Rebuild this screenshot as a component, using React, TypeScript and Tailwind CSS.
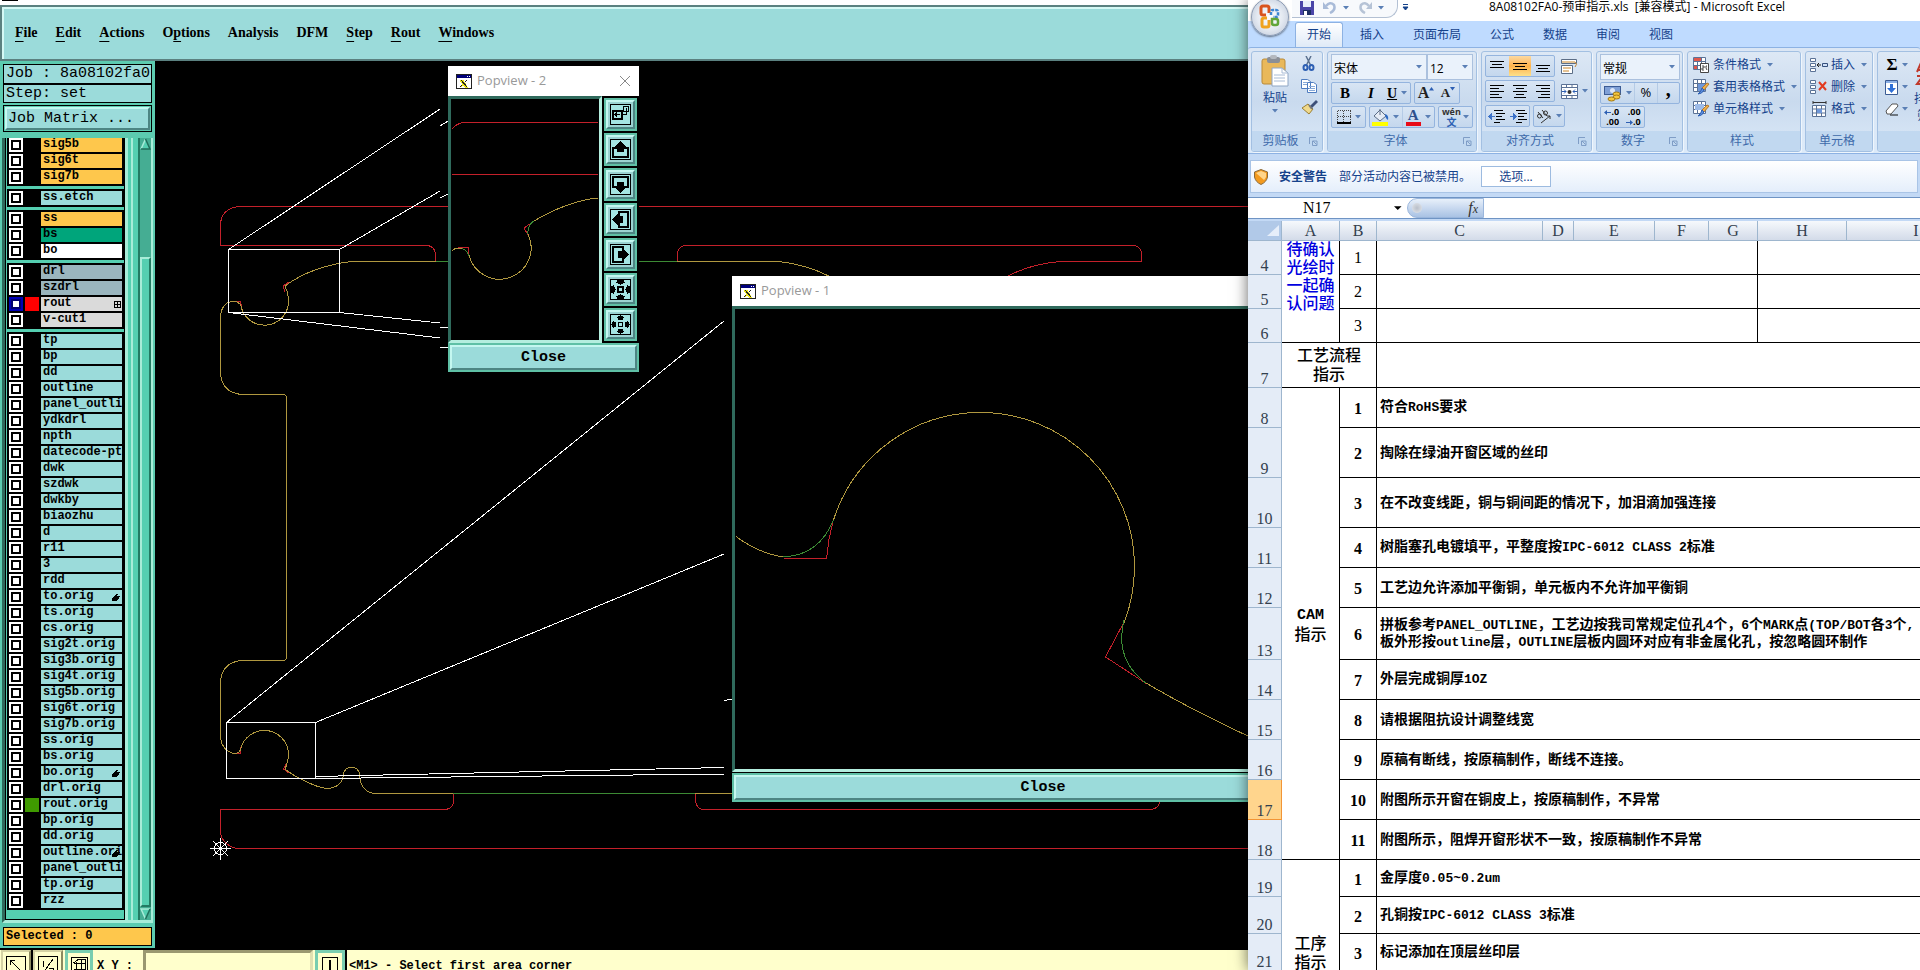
import { Fragment, type ReactNode } from "react";

interface Layer {
  name: string;
  color: string;
  swatch?: string;
  active?: boolean;
  mark?: "grid" | "hand";
}

const AQUA = "bg-[#9bdbda]";
const AMBER = "bg-[#fec74c]";

const aqua = (...names: string[]): Layer[] => names.map((name) => ({ name, color: AQUA }));

const layerGroups: Layer[][] = [
  [
    { name: "sig5b", color: AMBER },
    { name: "sig6t", color: AMBER },
    { name: "sig7b", color: AMBER },
  ],
  aqua("ss.etch"),
  [
    { name: "ss", color: AMBER },
    { name: "bs", color: "bg-[#00a57b]" },
    { name: "bo", color: "bg-white" },
  ],
  [
    { name: "drl", color: "bg-[#9ab5be]" },
    { name: "szdrl", color: "bg-[#9ab5be]" },
    { name: "rout", color: "bg-[#dadada]", swatch: "bg-[#ff0000]", active: true, mark: "grid" },
    { name: "v-cut1", color: "bg-[#dadada]" },
  ],
  [
    ...aqua("tp", "bp", "dd", "outline", "panel_outline", "ydkdrl", "npth", "datecode-pte", "dwk", "szdwk", "dwkby", "biaozhu", "d", "r11", "3", "rdd"),
    { name: "to.orig", color: AQUA, mark: "hand" },
    ...aqua("ts.orig", "cs.orig", "sig2t.orig", "sig3b.orig", "sig4t.orig", "sig5b.orig", "sig6t.orig", "sig7b.orig", "ss.orig", "bs.orig"),
    { name: "bo.orig", color: AQUA, mark: "hand" },
    ...aqua("drl.orig"),
    { name: "rout.orig", color: AQUA, swatch: "bg-[#3f9a00]" },
    ...aqua("bp.orig", "dd.orig"),
    { name: "outline.orig", color: AQUA, mark: "hand" },
    ...aqua("panel_outline", "tp.orig", "rzz"),
  ],
];

const menus = [
  ["", "F", "ile"],
  ["", "E", "dit"],
  ["", "A", "ctions"],
  ["O", "p", "tions"],
  ["Analysis", "", ""],
  ["DFM", "", ""],
  ["", "S", "tep"],
  ["", "R", "out"],
  ["", "W", "indows"],
];

const BEVEL = "border-2 border-t-[#c4f7f0] border-l-[#c4f7f0] border-r-[#4d8583] border-b-[#4d8583]";
const MONO = "font-['Liberation_Mono',monospace]";
const SERIF = "font-['Liberation_Serif','Noto_Sans_CJK_SC',serif]";
const UI = "font-['Open_Sans','Noto_Sans_CJK_SC',sans-serif]";

/* ---------- CAM window ---------- */

function MenuBar() {
  return (
    <nav className="flex h-14 shrink-0 items-center gap-[18px] border-y-2 border-l-2 border-[#5b8180] bg-[#9bdbda] pl-[13px] shadow-[inset_2px_2px_0_#d5f9f5,0_2px_0_#d5f9f5]">
      {menus.map(([pre, key, post]) => (
        <button key={pre + key + post} className="font-['Liberation_Serif',serif] text-[14px] leading-5 font-bold text-black">
          {pre}
          <span className="underline underline-offset-4">{key}</span>
          {post}
        </button>
      ))}
    </nav>
  );
}

function HandMark() {
  return (
    <svg className="absolute top-[4px] right-[2px]" width="8" height="7" viewBox="0 0 8 7" shapeRendering="crispEdges">
      <path d="M4 0h2v1H5v1h3v1H7v1h0v1H6v1H5v1H0V4h1V3h1V2h1V1h1z" />
    </svg>
  );
}

function GridMark() {
  return (
    <svg className="absolute top-[4px] right-px" width="7" height="7" viewBox="0 0 7 7" shapeRendering="crispEdges">
      <path d="M.5 .5h6v6h-6zM3.5 0v7M0 3.5h7" fill="none" stroke="#000" />
    </svg>
  );
}

function LayerRow({ layer, id }: { layer: Layer; id: string }) {
  return (
    <div className="flex h-[14px] items-center">
      <input
        id={id}
        type="checkbox"
        className={
          layer.active
            ? "size-[14px] shrink-0 appearance-none border-2 border-[#0000b4] bg-white shadow-[inset_0_0_0_2px_#000070]"
            : "size-[14px] shrink-0 appearance-none border-2 border-white bg-white shadow-[inset_0_0_0_2px_#000]"
        }
      />
      <span className={`mx-[2px] h-[14px] w-[14px] shrink-0 ${layer.swatch ?? "bg-black"}`} />
      <label
        htmlFor={id}
        className={`relative h-[14px] min-w-0 flex-1 overflow-hidden pl-[2px] text-[12px] leading-[13px] font-bold whitespace-nowrap ${MONO} ${layer.color}`}
      >
        {layer.name}
        {layer.mark === "hand" && <HandMark />}
        {layer.mark === "grid" && <GridMark />}
      </label>
    </div>
  );
}

function Sidebar() {
  return (
    <aside className={`flex w-[155px] shrink-0 flex-col border-x-2 border-[#5ccbb0] bg-[#5ccbb0] text-black ${MONO}`}>
      <div className="mx-px mt-[3px] border border-black">
        <div className="h-[18px] overflow-hidden bg-[#9bdbda] pl-[2px] text-[15px] leading-[18px] whitespace-nowrap">Job : 8a08102fa0</div>
        <div className="h-[19px] border-t-2 border-black bg-[#9bdbda] pl-[2px] text-[15px] leading-[17px]">Step: set</div>
      </div>
      <div className="mx-px mt-[2px] border border-black p-px">
        <button className={`block h-[23px] w-full bg-[#9bdbda] pl-px text-left text-[15px] leading-[19px] ${BEVEL}`}>Job Matrix ...</button>
      </div>
      <div className="mt-[6px] flex min-h-0 flex-1 border-b-[3px] border-l-[3px] border-b-[#a8ecd8] border-l-[#2f6a5c]">
        <div className="min-w-0 flex-1 overflow-hidden border-x border-b border-black bg-[#55cfb1]">
          {layerGroups.map((group, g) => (
            <div
              key={g}
              className={
                g === 0
                  ? "ml-px flex flex-col gap-[2px] bg-black px-[2px] pb-[2px]"
                  : "mt-[3px] ml-px flex flex-col gap-[2px] bg-black p-[2px]"
              }
            >
              {group.map((layer, i) => (
                <LayerRow key={i} layer={layer} id={`layer-${g}-${i}`} />
              ))}
            </div>
          ))}
        </div>
        <div className="w-[15px] shrink-0 border-r-2 border-l-[3px] border-r-[#237a63] border-l-[#a8ecd8] bg-[#55cfb1]">
          <div className="ml-[3px] h-full w-[2px] bg-[#a8ecd8]" />
        </div>
        <div className="flex w-[13px] shrink-0 flex-col border-r-2 border-[#a8ecd8] bg-[#45ad93]">
          <svg width="11" height="12" viewBox="0 0 11 12">
            <path d="M5.500 1 1 11h9z" fill="#55cfb1" />
            <path d="M5.500 1 1 11" stroke="#a8ecd8" strokeWidth="1.500" />
            <path d="M5.500 1 10 11H1" fill="none" stroke="#1f6e5a" strokeWidth="1.500" />
          </svg>
          <div className="mt-[107px] min-h-0 flex-1 border-2 border-t-[#a8ecd8] border-r-[#237a63] border-b-[#237a63] border-l-[#a8ecd8] bg-[#55cfb1]" />
          <svg className="shrink-0" width="11" height="13" viewBox="0 0 11 13">
            <path d="M1 2h9L5.500 12z" fill="#55cfb1" />
            <path d="M5.500 12 1 2h9" fill="none" stroke="#a8ecd8" strokeWidth="1.500" />
            <path d="M10 2 5.500 12" stroke="#1f6e5a" strokeWidth="1.500" />
          </svg>
        </div>
      </div>
      <div className="mx-px mt-1 mb-[2px] h-[19px] shrink-0 border border-black bg-[#fec74c] pl-[2px] text-[12px] leading-[16px] font-bold">
        Selected : 0
      </div>
    </aside>
  );
}

function BoardDrawing() {
  return (
    <svg className="absolute top-0 left-0" width="1200" height="887" viewBox="155 61 1200 887" fill="none" shapeRendering="crispEdges">
      <g stroke="#c4202a">
        <path d="M1355 206.500H240Q221 208 220.500 225V245.500H428Q435 247 435.500 254V261" />
        <path d="M677.500 261V254Q678 247 684 245.500H1135Q1141 247 1141.500 254V261.500H1060Q1030 264 1006 277" />
        <path d="M453.500 793V802Q453 808 446 809.500H220.500V832Q222 845 237 848.500H1355" />
        <path d="M695.500 793V800Q696 808 702 809.500H1152Q1159 808 1160 801" />
        <path d="M232 301.500H240.500L242 309M285 292 283 286 289 282M236 753.500H240.500V747M286 764 283.500 769 289 773" />
      </g>
      <g stroke="#b0983f">
        <path d="M436 261.500H352Q312 266 285 286Q289 294 288.500 302A24 24 0 0 1 241 306Q239 301 232 301.500Q221 303 220.500 318V374Q222 392 241 394.500H283Q287 395 286.500 399V657Q287 660 283 660.500H242Q222 662 220.500 682V738Q222 750 233 753.500Q240 754 241 748A24 24 0 0 1 264.500 730.500A24 24 0 0 1 288.500 754Q288 763 285 769Q292 775 303 780Q318 788 328 788.500Q342 787 343.500 775A8 8 0 0 1 359.500 775Q360 790 373 793.500H453" />
        <path d="M677 261.500H778Q805 264 831 277M695 793.500H740" />
      </g>
      <path d="M436 261.500H677M453 793.500H695" stroke="#3c8a34" />
      <g stroke="#fff">
        <path d="M228.500 249.500H339.500V312.500H228.500zM226.500 722.500H315.500V778.500H226.500z" />
        <path d="M228.500 249.500 440 109M339.500 249.500 440 191M228.500 312.500 440 338M339.500 312.500 440 323" />
        <path d="M440 126 448 121M440 198 448 194M440 327.500 448 328M440 347.500 448 348" />
        <path d="M226.500 722.500 724 321M315.500 722.500 724 554M315.500 776.500 724 767.500M315.500 778.500 724 774M724 700.500 732 699" />
        <circle cx="220.500" cy="848.500" r="6" />
        <path d="M220.500 838V859.500M210 848.500H231M213 841 228 856M228 841 213 856" />
      </g>
    </svg>
  );
}

function XIcon() {
  return (
    <svg width="16" height="15" viewBox="0 0 16 15" shapeRendering="crispEdges">
      <rect x=".5" y=".5" width="15" height="14" fill="#fff" stroke="#222" />
      <rect x="1" y="1" width="14" height="3" fill="#00007b" />
      <path d="M11 2h1M13 2h1" stroke="#fff" />
      <path d="M4 6h3l4 7H9zM11 6 5 13" fill="#f4ee1c" stroke="#efe81a" />
      <path d="m5 6 6 7" stroke="#222" />
      <path d="M11 6 9 8M6 11l-2 2" stroke="#222" />
    </svg>
  );
}

const trayArrow = (
  <>
    <path d="M7.500 8.500H3V18H18V8.500H13.500" fill="none" stroke="#000" strokeWidth="2" />
    <path d="M10.500 2 16 8H14V13H7V8H5z" />
  </>
);

const popTools: { label: string; art: ReactNode }[] = [
  {
    label: "Popview",
    art: (
      <>
        <path d="M3 6.500H12V15H3z" fill="none" stroke="#000" strokeWidth="2" />
        <path d="M10 10.500H5M7 8.500 5 10.500 7 12.500M13.500 2.500H18.500V7.500H13.500zM16.500 4V10.500H13" fill="none" stroke="#000" />
      </>
    ),
  },
  { label: "Pan up", art: trayArrow },
  { label: "Pan down", art: <g transform="rotate(180 10.500 10.500)">{trayArrow}</g> },
  { label: "Pan left", art: <g transform="rotate(-90 10.500 10.500)">{trayArrow}</g> },
  { label: "Pan right", art: <g transform="rotate(90 10.500 10.500)">{trayArrow}</g> },
  {
    label: "Zoom in",
    art: (
      <>
        <path d="M8 8H13V13H8z" fill="none" stroke="#000" strokeWidth="2" />
        <path d="M7 1H14V3H16L10.500 6 5 3H7zM7 20H14V18H16L10.500 15 5 18H7zM1 7V14H3V16L6 10.500 3 5V7zM20 7V14H18V16L15 10.500 18 5V7z" />
      </>
    ),
  },
  {
    label: "Zoom out",
    art: (
      <>
        <path d="M8.500 8.500H12.500V12.500H8.500z" fill="none" stroke="#000" />
        <path d="M8 6H13V4H15L10.500 1 6 4H8zM8 15H13V17H15L10.500 20 6 17H8zM6 8V13H4V15L1 10.500 4 6V8zM15 8V13H17V15L20 10.500 17 6V8z" />
      </>
    ),
  },
];

function PopTitle({ title, closable }: { title: string; closable?: boolean }) {
  return (
    <header className={`flex h-[30px] shrink-0 items-center bg-white pr-2 pl-2 text-[13px] text-[#999] ${UI}`}>
      <XIcon />
      <span className="ml-[5px] flex-1">{title}</span>
      {closable && (
        <button aria-label="Close window">
          <svg width="12" height="12" viewBox="0 0 12 12">
            <path d="m1 1 10 10M11 1 1 11" stroke="#888" />
          </svg>
        </button>
      )}
    </header>
  );
}

function CloseButton() {
  return (
    <div className="bg-[#5fc0a6] p-[2px]">
      <button className={`block h-[25px] w-full bg-[#9bdbda] text-center text-[15px] leading-[21px] font-bold text-black ${MONO} ${BEVEL}`}>Close</button>
    </div>
  );
}

const POP_FRAME = "overflow-hidden border-[3px] border-t-[#2f6a5c] border-r-[#b4eedf] border-b-[#b4eedf] border-l-[#2f6a5c] bg-black";

function PopviewTwo() {
  return (
    <section className="absolute top-[5px] left-[293px] w-[191px] bg-black">
      <PopTitle title="Popview - 2" closable />
      <div className="flex">
        <div className={`h-[247px] flex-1 ${POP_FRAME}`}>
          <svg width="148" height="241" viewBox="451 99 148 241" fill="none" shapeRendering="crispEdges">
            <path d="M452 129Q456 124 463 122.500H598M452 174.500H598M458 247.500H468.500V256M528 235 524 228 534 221" stroke="#c4202a" />
            <path d="M462 248.500Q467 250 469 256M528 234Q527 225 535 220" stroke="#3c8a34" />
            <path d="M452 250.500Q456 247 462 248.500M469 255A31.500 31.500 0 1 0 528 234M534 221Q568 201 598 198" stroke="#b0983f" />
          </svg>
        </div>
        <div className="flex flex-col gap-[2px] px-[2px] pt-[2px]">
          {popTools.map((tool) => (
            <div key={tool.label} className="bg-[#5fc0a6] p-[2px]">
              <button aria-label={tool.label} className={`flex size-[29px] items-center justify-center bg-[#9bd3d2] ${BEVEL}`}>
                <svg width="21" height="21" viewBox="0 0 21 21" shapeRendering="crispEdges">
                  <rect x=".5" y=".5" width="20" height="20" fill="#a4e4e2" stroke="#000" />
                  {tool.art}
                </svg>
              </button>
            </div>
          ))}
        </div>
      </div>
      <CloseButton />
    </section>
  );
}

function PopviewOne() {
  return (
    <section className="absolute top-[215px] left-[577px] w-[622px] bg-black">
      <PopTitle title="Popview - 1" />
      <div className={`h-[466px] ${POP_FRAME}`}>
        <svg width="616" height="460" viewBox="735 309 616 460" fill="none" shapeRendering="crispEdges">
          <path d="M784 558.500H826.500V559Q828 540 833 521M1124 622 1105.500 657 1147 684" stroke="#c4202a" />
          <path d="M780 556.500Q818 558 834 519M1124 620Q1114 660 1147 684" stroke="#3c8a34" />
          <path
            d="M736 536.500Q758 553 783 557M833.500 520A154 154 0 0 1 981 412.500A154 154 0 0 1 1134.500 566Q1134.500 596 1124 623M1146 683Q1190 709 1250 737L1351 785"
            stroke="#b0983f"
          />
        </svg>
      </div>
      <div className="pt-px">
        <CloseButton />
      </div>
    </section>
  );
}

function StatusBar() {
  const icon = "flex h-8 w-[30px] justify-center border-2 border-t-[#d5d3a4] border-l-[#d5d3a4] border-r-[#8c8a60] border-b-[#8c8a60] bg-[#ffffcc] pt-1";
  return (
    <footer className={`flex h-[22px] shrink-0 items-start overflow-hidden border-t-2 border-black bg-[#ffffcc] pl-px text-[12px] leading-4 font-bold text-black ${MONO}`}>
      <button aria-label="Select area" className={icon}>
        <svg width="20" height="20" viewBox="0 0 20 20" fill="none" stroke="#000" shapeRendering="crispEdges">
          <path d="M.5.5h19v19H.5zM4.500 4.500l11 11M4.500 9V4.500H9" />
        </svg>
      </button>
      <div className="h-8 w-[2px] bg-black" />
      <button aria-label="Ratio" className={icon}>
        <svg width="20" height="20" viewBox="0 0 20 20" fill="none" stroke="#000" shapeRendering="crispEdges">
          <path d="M.5.5h19v19H.5zM15 3 5 17M5.500 4.500v6M11 12.500h4v4" />
        </svg>
      </button>
      <button aria-label="Grid" className="ml-[2px] flex h-8 w-[28px] justify-center border-[3px] border-[#79cdb0] bg-[#ffffcc] pt-1">
        <svg width="17" height="20" viewBox="0 0 17 20" fill="none" stroke="#000" shapeRendering="crispEdges">
          <path d="M.5.500h16v19H.5zM2.500 6.500h12M2.500 12.500h12M5.500 5v13M10.500 2v16M2.500 6 7 2.500h7.500v10" />
        </svg>
      </button>
      <label htmlFor="xy" className="ml-[2px] h-8 w-[48px] pt-2 pl-[2px] whitespace-nowrap">
        X Y :
      </label>
      <input
        id="xy"
        className="h-8 w-[170px] border-[3px] border-t-[#9a9870] border-r-[#e2e0b0] border-b-[#e2e0b0] border-l-[#9a9870] bg-[#ffffcc] outline-none"
      />
      <button aria-label="Info" className="ml-[2px] flex h-8 w-[30px] justify-center border-[3px] border-[#79cdb0] bg-[#ffffcc] pt-1">
        <svg width="16" height="20" viewBox="0 0 16 20" fill="none" stroke="#000" shapeRendering="crispEdges">
          <path d="M.5.5h15v19H.5z" />
          <path d="M8 3v12" strokeWidth="2" />
        </svg>
      </button>
      <p className="h-8 border-l-2 border-black pt-2 pl-[2px] whitespace-nowrap">&lt;M1&gt; - Select first area corner</p>
    </footer>
  );
}

function CamWindow() {
  return (
    <section className="flex min-w-0 flex-1 flex-col overflow-hidden bg-black">
      <div className="h-[5px] shrink-0 bg-white pl-[2px]">
        <div className="h-px w-4 bg-black" />
      </div>
      <MenuBar />
      <div className="flex min-h-0 flex-1">
        <Sidebar />
        <main className="relative min-w-0 flex-1 overflow-hidden bg-black">
          <BoardDrawing />
          <PopviewTwo />
          <PopviewOne />
        </main>
      </div>
      <StatusBar />
    </section>
  );
}

/* ---------- Spreadsheet window ---------- */

function Caret() {
  return (
    <svg className="shrink-0" width="6" height="4" viewBox="0 0 6 4">
      <path d="M0 0h6L3 3.500z" fill="#5a7fb5" />
    </svg>
  );
}

function SizeArrow({ up }: { up?: boolean }) {
  return (
    <svg className="mt-1 shrink-0 self-start" width="5" height="4" viewBox="0 0 5 4">
      <path d={up ? "M0 3.500h5L2.500 0z" : "M0 0h5L2.500 3.500z"} fill="#2d5fb3" />
    </svg>
  );
}

function Launcher() {
  return (
    <svg width="9" height="9" viewBox="0 0 9 9" fill="none" stroke="#7f9dc6">
      <path d="M.5 7V.5H7M3.500 4v4.500h4.500V4zM4 4l3.500 3.500" />
    </svg>
  );
}

function Group({ title, width, launcher, children }: { title: string; width: string; launcher?: boolean; children: ReactNode }) {
  return (
    <section className={`flex h-[101px] shrink-0 flex-col overflow-hidden rounded-[3px] border border-[#a3c0e2] bg-linear-to-b from-[#dde8f5] via-[#c9daee] to-[#dbe9f8] shadow-[1px_1px_0_#eff6fd] ${width}`}>
      <div className="h-[79px] px-[3px] pt-[2px]">{children}</div>
      <div className="flex h-5 items-center bg-[#c1d8f0] pr-1 text-[12px] leading-5 text-[#3e6aaa]">
        <h3 className="flex-1 text-center">{title}</h3>
        {launcher && (
          <button aria-label={`${title} ...`}>
            <Launcher />
          </button>
        )}
      </div>
    </section>
  );
}

function Cluster({ width, children }: { width: string; children: ReactNode }) {
  return (
    <div className={`flex h-[22px] items-center rounded-[2px] border border-[#94b4de] bg-linear-to-b from-[#d8e5f4] to-[#c4d7ed] ${width}`}>{children}</div>
  );
}

const TOOL = "flex h-full flex-1 items-center justify-center gap-1 text-black";

function Lines({ rows }: { rows: number[][] }) {
  return (
    <svg width="14" height="13" viewBox="0 0 14 13" shapeRendering="crispEdges">
      {rows.map(([from, to, y]) => (
        <path key={y} d={`M${from} ${y + 0.5}H${to}`} stroke="#000" />
      ))}
    </svg>
  );
}

function Drop({ label, value, width }: { label: string; value: string; width: string }) {
  return (
    <div className={`relative h-[26px] border border-[#abc1de] bg-[#eaf2fb] ${width}`}>
      <select aria-label={label} className="h-full w-full appearance-none bg-transparent pl-[2px] text-[12px] text-black outline-none">
        <option>{value}</option>
      </select>
      <span className="pointer-events-none absolute top-[10px] right-[4px] flex">
        <Caret />
      </span>
    </div>
  );
}

function Indent({ flip }: { flip?: boolean }) {
  return (
    <svg width="17" height="15" viewBox="0 0 17 15" shapeRendering="crispEdges">
      <path d="M6 1.500H15M8 4.500H17M8 7.500H14M8 10.500H17M6 13.500H12" stroke="#000" strokeWidth="1" />
      <path d={flip ? "M0 7h3V4l4 3.500L3 11V8H0z" : "M7 7H4V4L0 7.500 4 11V8h3z"} fill="#3c72c8" />
    </svg>
  );
}

function ClipboardGroup() {
  return (
    <Group title="剪贴板" width="w-[72px]" launcher>
      <div className="flex">
        <button className="flex w-10 flex-col items-center gap-[2px] text-[12px] leading-[18px] text-[#15428b]">
          <svg className="mt-px" width="28" height="32" viewBox="0 0 28 32">
            <rect x="1" y="4" width="23" height="25" rx="2" fill="#e9b85a" stroke="#b98a39" />
            <rect x="6" y="2" width="13" height="6" rx="2" fill="#8b8f96" />
            <rect x="9" y="0" width="7" height="4" rx="2" fill="#b4b8be" />
            <path d="M11 13h10l6 5v13H11z" fill="#fff" stroke="#8fa6c4" />
            <path d="M21 13v5h6M13 20h11M13 23h11M13 26h11" fill="none" stroke="#a9bcd6" />
          </svg>
          <span>粘贴</span>
          <Caret />
        </button>
        <div className="ml-[6px] flex flex-col gap-[7px] pt-[2px]">
          <button aria-label="剪切">
            <svg width="16" height="15" viewBox="0 0 16 15" fill="none">
              <path d="M5 0 9.500 9M10 0 5.500 9" stroke="#5d7391" strokeWidth="1.500" />
              <ellipse cx="4.500" cy="11.500" rx="2" ry="2.500" stroke="#2d5fb3" strokeWidth="2" />
              <ellipse cx="10.500" cy="11.500" rx="2" ry="2.500" stroke="#2d5fb3" strokeWidth="2" />
            </svg>
          </button>
          <button aria-label="复制">
            <svg width="16" height="15" viewBox="0 0 16 15" fill="#fff" stroke="#4e7cc0">
              <path d="M.5 1.500h6l3 2v7h-9zM6.500 4.500h6l3 2v8h-9z" />
              <path d="M2 4.500h4M2 6.500h4M8 8.500h6M8 10.500h6M8 12.500h6" stroke="#87a9d8" />
            </svg>
          </button>
          <button aria-label="格式刷">
            <svg width="17" height="16" viewBox="0 0 17 16">
              <path d="m15 0 2 2-6 6-2-2z" fill="#3c4f78" />
              <path d="M7 4 12 9 8 14 1 8z" fill="#f0d98b" stroke="#9c8034" />
              <path d="m8 5 3 4" stroke="#777" strokeWidth="2" />
            </svg>
          </button>
        </div>
      </div>
    </Group>
  );
}

function FontGroup() {
  return (
    <Group title="字体" width="w-[150px]" launcher>
      <div className="flex">
        <Drop label="字体" value="宋体" width="w-24" />
        <Drop label="字号" value="12" width="w-[46px]" />
      </div>
      <div className={`mt-[2px] flex gap-[3px] ${SERIF}`}>
        <Cluster width="w-20">
          <button className={`${TOOL} text-[15px] font-bold`}>B</button>
          <button className={`${TOOL} text-[15px] font-bold italic`}>I</button>
          <button className={`${TOOL} text-[14px] font-bold`}>
            <span className="underline">U</span>
            <Caret />
          </button>
        </Cluster>
        <Cluster width="w-[46px]">
          <button aria-label="增大字号" className="flex h-full w-[22px] items-center justify-center text-[16px] leading-5 font-bold text-[#222]">
            A
            <SizeArrow up />
          </button>
          <button aria-label="减小字号" className="flex h-full w-[22px] items-center justify-center text-[13px] leading-5 font-bold text-[#222]">
            A
            <SizeArrow />
          </button>
        </Cluster>
      </div>
      <div className="mt-[2px] flex gap-[3px]">
        <Cluster width="w-9">
          <button aria-label="边框" className={TOOL}>
            <svg width="14" height="14" viewBox="0 0 14 14" fill="none" stroke="#444" shapeRendering="crispEdges">
              <path d="M.5.5h13M.5 6.500h13M.5.5v12M6.500.5v12M13.500.5v12" strokeDasharray="1 1" />
              <path d="M0 13h14" stroke="#000" strokeWidth="2" />
            </svg>
            <Caret />
          </button>
        </Cluster>
        <Cluster width="w-[67px]">
          <button aria-label="填充颜色" className={TOOL}>
            <svg width="17" height="17" viewBox="0 0 17 17">
              <path d="M8 1 14 7 8 12 2 7z" fill="#e5ecf5" stroke="#5b6d86" />
              <path d="M13 5q4 1 3 6-3-2-3-6z" fill="#2d6ac4" />
              <path d="M8 0v6" stroke="#5b6d86" />
              <rect x="0" y="13" width="16" height="4" fill="#ffff00" />
            </svg>
            <Caret />
          </button>
          <button aria-label="字体颜色" className={`${TOOL} border-l border-[#b5cbe6]`}>
            <span className={`border-b-4 border-[#e80b18] px-[2px] text-[15px] leading-[13px] font-bold text-[#2f508c] ${SERIF}`}>A</span>
            <Caret />
          </button>
        </Cluster>
        <Cluster width="w-9">
          <button className="flex h-full flex-1 items-center justify-center gap-[2px]">
            <span className="flex flex-col items-center text-[9px] leading-[10px] font-bold text-[#333]">
              <span>wén</span>
              <span className="text-[10px] text-[#2d5fb3]">文</span>
            </span>
            <Caret />
          </button>
        </Cluster>
      </div>
    </Group>
  );
}

function AlignGroup() {
  const box = "flex h-full w-[23px] items-center justify-center";
  return (
    <Group title="对齐方式" width="w-[111px]" launcher>
      <div className="mt-px flex items-center gap-[6px]">
        <Cluster width="w-[70px]">
          <button aria-label="顶端对齐" className={box}>
            <Lines rows={[[0, 14, 1], [2, 12, 4], [0, 14, 7]]} />
          </button>
          <button aria-label="垂直居中" className={`${box} bg-linear-to-b from-[#fcd9a0] via-[#fdb24a] to-[#fde08a]`}>
            <Lines rows={[[0, 14, 3], [2, 12, 6], [0, 14, 9]]} />
          </button>
          <button aria-label="底端对齐" className={box}>
            <Lines rows={[[0, 14, 5], [2, 12, 8], [0, 14, 11]]} />
          </button>
        </Cluster>
        <button aria-label="自动换行">
          <svg width="17" height="16" viewBox="0 0 17 16" fill="none">
            <path d="M.5 1.500H15.500v4H.5z" fill="#fff" stroke="#5b6d86" />
            <path d="M1 4h13q3 2 0 5" stroke="#c98528" />
            <path d="M.5 7.500h11v8H.5z" fill="#fff" stroke="#5b6d86" />
            <path d="M2 10h8M2 13h6" stroke="#c98528" />
          </svg>
        </button>
      </div>
      <div className="mt-[3px] flex items-center gap-[6px]">
        <Cluster width="w-[70px]">
          <button aria-label="左对齐" className={box}>
            <Lines rows={[[0, 14, 0], [0, 9, 3], [0, 14, 6], [0, 9, 9], [0, 12, 12]]} />
          </button>
          <button aria-label="居中" className={box}>
            <Lines rows={[[0, 14, 0], [3, 11, 3], [0, 14, 6], [3, 11, 9], [1, 13, 12]]} />
          </button>
          <button aria-label="右对齐" className={box}>
            <Lines rows={[[0, 14, 0], [5, 14, 3], [0, 14, 6], [5, 14, 9], [2, 14, 12]]} />
          </button>
        </Cluster>
        <button aria-label="合并后居中" className="flex items-center gap-1">
          <svg width="17" height="15" viewBox="0 0 17 15">
            <path d="M.5.500h16v14H.5zM.5 3.500h16M.5 11.500h16M5.500 0v3M11 0v3M5.500 12v3M11 12v3" fill="#fff" stroke="#5b7296" />
            <path d="M1 7.500h4M16 7.500h-4M3 5.500l2 2-2 2M14 5.500l-2 2 2 2" fill="none" stroke="#2d5fb3" />
            <circle cx="8.500" cy="8" r="2" fill="#333" />
          </svg>
          <Caret />
        </button>
      </div>
      <div className="mt-[3px] flex gap-[3px]">
        <Cluster width="w-[45px]">
          <button aria-label="减少缩进" className={box}>
            <Indent />
          </button>
          <button aria-label="增加缩进" className={box}>
            <Indent flip />
          </button>
        </Cluster>
        <Cluster width="w-8">
          <button aria-label="方向" className="flex h-full flex-1 items-center justify-center gap-1">
            <svg width="16" height="15" viewBox="0 0 16 15" fill="none" stroke="#333">
              <circle cx="3.500" cy="7" r="2" />
              <path d="m2 3 5 6M6 1l5 6" />
              <circle cx="9.500" cy="4" r="2" />
              <path d="m5 14 9-7M14 10V7h-3" />
            </svg>
            <Caret />
          </button>
        </Cluster>
      </div>
    </Group>
  );
}

function NumberGroup() {
  return (
    <Group title="数字" width="w-[87px]" launcher>
      <Drop label="数字格式" value="常规" width="w-20" />
      <div className="mt-[2px]">
        <Cluster width="w-20">
          <button aria-label="会计数字格式" className="flex h-full w-[33px] items-center justify-center gap-1">
            <svg width="18" height="17" viewBox="0 0 18 17">
              <rect x=".5" y="1.500" width="16" height="8" fill="#7fa0d6" stroke="#3b5b94" />
              <circle cx="8.500" cy="5.500" r="2.500" fill="#dbe6f7" />
              <ellipse cx="12.500" cy="9" rx="3.500" ry="2" fill="#f4c63e" stroke="#a57a14" />
              <ellipse cx="12.500" cy="12" rx="3.500" ry="2" fill="#f4c63e" stroke="#a57a14" />
              <ellipse cx="7.500" cy="14" rx="3.500" ry="2" fill="#f4c63e" stroke="#a57a14" />
            </svg>
            <Caret />
          </button>
          <button className={`${TOOL} border-l border-[#b5cbe6] text-[13px]`}>%</button>
          <button className={`${TOOL} border-l border-[#b5cbe6] pb-2 text-[20px] leading-3 font-bold ${SERIF}`}>,</button>
        </Cluster>
      </div>
      <div className="mt-[2px]">
        <Cluster width="w-[45px]">
          <button aria-label="增加小数位数" className={`${TOOL} text-[9px] leading-[10px] font-bold`}>
            <span className="flex flex-col items-end">
              <span className="flex items-center">
                <svg width="7" height="5" viewBox="0 0 7 5">
                  <path d="M3 0v2h4v1H3v2L0 2.500z" fill="#2d5fb3" />
                </svg>
                .0
              </span>
              <span>.00</span>
            </span>
          </button>
          <button aria-label="减少小数位数" className={`${TOOL} text-[9px] leading-[10px] font-bold`}>
            <span className="flex flex-col items-end">
              <span>.00</span>
              <span className="flex items-center">
                <svg width="7" height="5" viewBox="0 0 7 5">
                  <path d="M4 0v2H0v1h4v2l3-2.500z" fill="#2d5fb3" />
                </svg>
                .0
              </span>
            </span>
          </button>
        </Cluster>
      </div>
    </Group>
  );
}

function RowButton({ icon, label }: { icon: ReactNode; label: string }) {
  return (
    <button className="flex h-[22px] items-center gap-[3px] text-[12px] leading-[18px] whitespace-nowrap text-[#15428b]">
      {icon}
      {label && <span className="mr-[3px]">{label}</span>}
      <Caret />
    </button>
  );
}

function SheetIcon({ children }: { children?: ReactNode }) {
  return (
    <svg width="17" height="16" viewBox="0 0 17 16" fill="none">
      <path d="M.5.500h12v12H.5zM.5 4.500h12M.5 8.500h12M4.500.5v12M8.500.5v12" fill="#fff" stroke="#5b7296" />
      {children}
    </svg>
  );
}

function Pencil() {
  return (
    <>
      <path d="m16 5-5 6-2-2 5-5z" fill="#f0b04a" stroke="#b5782a" />
      <path d="m9 9 2 2q-2 4-6 4 3-2 4-6z" fill="#5f8fdc" stroke="#2d5fb3" />
    </>
  );
}

function CellsIcon({ children }: { children: ReactNode }) {
  return (
    <svg width="18" height="15" viewBox="0 0 18 15" fill="none">
      <path d="M.5.500h5v3h-5zM.5 5.500h5v3h-5zM.5 10.500h5v3h-5z" fill="#fff" stroke="#5b7296" />
      {children}
    </svg>
  );
}

function Ribbon() {
  return (
    <div className="flex h-[107px] shrink-0 gap-1 overflow-hidden rounded-t-[3px] border-y border-y-[#8db2e3] bg-linear-to-b from-[#dbe6f4] to-[#dceaf9] px-[3px] pt-[3px]">
      <ClipboardGroup />
      <FontGroup />
      <AlignGroup />
      <NumberGroup />
      <Group title="样式" width="w-[114px]">
        <div className="pl-[2px]">
          <RowButton
            label="条件格式"
            icon={
              <SheetIcon>
                <path d="M1 1h7v3H1zM1 9h3v3H1z" fill="#e0574b" />
                <path d="M7.500 6.500h8v9h-8z" fill="#fff" stroke="#444" />
                <path d="M9 9h2v2H9v2h2M14 9h-1v2l1 2" stroke="#444" />
              </SheetIcon>
            }
          />
          <RowButton
            label="套用表格格式"
            icon={
              <SheetIcon>
                <path d="M5 5h7v7H5z" fill="#6f97d8" />
                <Pencil />
              </SheetIcon>
            }
          />
          <RowButton
            label="单元格样式"
            icon={
              <SheetIcon>
                <path d="M2 3h9v6H2z" fill="#9dbbe8" />
                <Pencil />
              </SheetIcon>
            }
          />
        </div>
      </Group>
      <Group title="单元格" width="w-[68px]">
        <div className="pl-px">
          <RowButton
            label="插入"
            icon={
              <CellsIcon>
                <path d="M11 7H7M9 5 7 7l2 2" stroke="#222" />
                <path d="M12.500 5.500h5v3h-5z" fill="#cfe0f7" stroke="#35507d" />
              </CellsIcon>
            }
          />
          <RowButton
            label="删除"
            icon={
              <CellsIcon>
                <path d="m9 2 7 8M16 2 9 10" stroke="#e23b22" strokeWidth="2" />
              </CellsIcon>
            }
          />
          <RowButton
            label="格式"
            icon={
              <svg width="18" height="16" viewBox="0 0 18 16">
                <path d="M2.500 4.500h13v11h-13zM6.500 4v12M11.500 4v12M2 8h14M2 12h14" fill="#fff" stroke="#5b7296" />
                <path d="M7 8h5v4H7z" fill="#6f97d8" />
                <path d="M3 0v3M16 0v3M3 1.500h13" fill="none" stroke="#333" />
              </svg>
            }
          />
        </div>
      </Group>
      <Group title="" width="w-[150px]">
        <div className="flex gap-[6px] pl-[4px]">
          <div>
            <RowButton label="" icon={<span className={`w-[14px] text-[17px] font-bold text-black ${SERIF}`}>Σ</span>} />
            <RowButton
              label=""
              icon={
                <svg width="14" height="15" viewBox="0 0 14 15">
                  <path d="M.5.500h12v14H.5z" fill="#fff" stroke="#3b5b94" />
                  <path d="M1 1h11v2H1z" fill="#8cb0e6" />
                  <path d="M5 4h3v4h3l-4.500 5L2 8h3z" fill="#2f6fd6" />
                </svg>
              }
            />
            <RowButton
              label=""
              icon={
                <svg width="14" height="13" viewBox="0 0 14 13">
                  <path d="M7 1h5l1 2-7 8H2L1 8z" fill="#fff" stroke="#555" />
                  <path d="M5 12h8" stroke="#111" />
                </svg>
              }
            />
          </div>
          <button className="flex shrink-0 flex-col items-center pt-2 text-[12px] leading-[17px] whitespace-nowrap text-[#15428b]">
            <svg className="mb-1 self-start" width="26" height="24" viewBox="0 0 26 24">
              <path d="M3 10 6 3l3 7M4 8h4M3 14h6l-6 8h6" fill="none" stroke="#c0392b" strokeWidth="2" />
              <path d="M12 8h13l-5 6v8l-3-2v-6z" fill="#d9b25a" />
            </svg>
            <span>排序和</span>
            <span className="self-start pl-[3px]">筛选</span>
          </button>
        </div>
      </Group>
    </div>
  );
}

function OfficeButton() {
  return (
    <button aria-label="Office" className="absolute -top-[2px] left-[3px] z-10 flex size-[38px] items-center justify-center rounded-full border border-[#8c9bb3] bg-radial from-white via-[#e4e9f1] to-[#b9c4d6] shadow-[0_1px_2px_rgba(0,0,0,.5)]">
      <svg width="24" height="26" viewBox="0 0 24 26" fill="none" strokeWidth="3">
        <path d="M11 9V4q0-2-2-2H5Q3 2 3 4v5q0 2 2 2h3" stroke="#d9541e" />
        <path d="M13 11V8q0-2 2-2h3q2 0 2 2v3q0 2-2 2h-3" stroke="#3f86d2" strokeWidth="2.500" strokeDasharray="3 1" />
        <path d="M9 14H6q-2 0-2 2v5q0 2 2 2h3q2 0 2-2v-5" stroke="#f0a31f" />
        <path d="M14 15h4q2 0 2 2v2q0 2-2 2h-2q-2 0-2-2z" stroke="#63a63a" strokeWidth="2.500" />
      </svg>
    </button>
  );
}

const tabs = ["插入", "页面布局", "公式", "数据", "审阅", "视图"];

function TitleAndTabs() {
  return (
    <header className="relative shrink-0">
      <OfficeButton />
      <div className="flex h-[21px] items-start bg-white pl-11">
        <div className="flex h-[18px] w-[106px] items-center rounded-br-xl border-r border-b border-[#b3c0d3] bg-[#f7f9fc] pb-[2px] pl-2">
          <button aria-label="保存">
            <svg width="14" height="14" viewBox="0 0 14 14">
              <path d="M0 0h14v14H0z" fill="#4a45a8" />
              <path d="M3 0h8v6H3z" fill="#e8effa" />
              <path d="M3 9h8v5H3z" fill="#1d2f63" />
              <path d="M4 10h3v4H4z" fill="#fff" />
            </svg>
          </button>
          <button aria-label="撤消" className="ml-[9px] flex items-center gap-[6px]">
            <svg width="14" height="13" viewBox="0 0 14 13" fill="none">
              <path d="M3 5q4-5 8-1 2 5-4 8" stroke="#a9bbd8" strokeWidth="2.500" />
              <path d="M0 1v7h6z" fill="#a9bbd8" />
            </svg>
            <Caret />
          </button>
          <button aria-label="恢复" className="ml-[9px] flex items-center gap-[6px]">
            <svg width="14" height="13" viewBox="0 0 14 13" fill="none">
              <path d="M11 5Q7 0 3 4q-2 5 4 8" stroke="#b6c3d6" strokeWidth="2.500" />
              <path d="M14 1v7H8z" fill="#b6c3d6" />
            </svg>
            <Caret />
          </button>
        </div>
        <svg className="mt-1 ml-1" width="7" height="7" viewBox="0 0 7 7">
          <path d="M1 .5h5M1 3h5L3.500 6z" fill="#15428b" stroke="#15428b" />
        </svg>
        <h1 className="-mt-px flex-1 pl-20 text-[12px] leading-4 whitespace-pre text-black">8A08102FA0-预审指示.xls  [兼容模式] - Microsoft Excel</h1>
      </div>
      <div className="flex h-[26px] items-end gap-[5px] bg-[#bfdbff] pl-[47px] text-[12px] leading-[18px] text-[#15428b]">
        <button className="h-[25px] rounded-t-[3px] border border-b-0 border-[#8db2e3] bg-linear-to-b from-white to-[#dfeaf7] px-[11px]">开始</button>
        {tabs.map((tab) => (
          <button key={tab} className="h-[25px] px-3">
            {tab}
          </button>
        ))}
      </div>
    </header>
  );
}

function MessageBar() {
  return (
    <div className="mx-[2px] mt-[6px] flex h-[33px] shrink-0 items-center border border-[#a9c4e6] bg-linear-to-b from-white to-[#e4eefb] pl-[3px] text-[12px] leading-4 text-[#15428b]">
      <svg width="14" height="16" viewBox="0 0 14 16">
        <path d="M7 .5 13.500 3v5q-1 5-6.500 7.500Q1.500 13 .5 8V3z" fill="#f39a1e" stroke="#8a6a3a" />
        <path d="M7 2 12 4v4q-1 2-2 3L2 4z" fill="#ffd58a" />
      </svg>
      <strong className="ml-[11px]">安全警告</strong>
      <span className="ml-3">部分活动内容已被禁用。</span>
      <button className="ml-[10px] h-[21px] w-[70px] border border-[#9dbbe0] bg-white">选项...</button>
    </div>
  );
}

function FormulaBar() {
  return (
    <div className="mt-[4px] flex h-[22px] shrink-0 border-y border-[#6f94c4] bg-white">
      <div className="flex w-[159px] items-center pr-[5px]">
        <input aria-label="名称框" defaultValue="N17" className={`w-full min-w-0 bg-transparent pr-2 text-center text-[16px] text-black outline-none ${SERIF}`} />
        <svg width="9" height="5" viewBox="0 0 9 5">
          <path d="M0 0h8L4 4z" />
        </svg>
      </div>
      <div className="flex w-[77px] items-center justify-between rounded-l-full border border-[#9ab6dc] bg-linear-to-b from-[#e8f0fa] to-[#a9c2e4] pr-[5px] pl-1">
        <span className="size-[10px] rounded-full bg-radial from-[#b9bfc9] to-[#e4e8ee]" />
        <button aria-label="插入函数" className={`text-[16px] leading-4 text-[#333] italic ${SERIF}`}>
          f<span className="text-[12px]">x</span>
        </button>
      </div>
      <input aria-label="编辑栏" className="min-w-0 flex-1 bg-white outline-none" />
    </div>
  );
}

// latin runs are set in half-width cells, like the CJK face they sit in
function Mixed({ text }: { text: string }) {
  return (
    <>
      {text.split("\n").map((line, i) => (
        <Fragment key={i}>
          {i > 0 && <br />}
          {line.split(/([\x20-\x7e]+)/).map((part, j) =>
            j % 2 ? (
              <span key={j} className={`text-[13px] ${MONO}`}>
                {part}
              </span>
            ) : (
              part
            ),
          )}
        </Fragment>
      ))}
    </>
  );
}

const columns = [
  { name: "A", width: "w-[58px]" },
  { name: "B", width: "w-[37px]" },
  { name: "C", width: "w-[166px]" },
  { name: "D", width: "w-[31px]" },
  { name: "E", width: "w-[81px]" },
  { name: "F", width: "w-[54px]" },
  { name: "G", width: "w-[49px]" },
  { name: "H", width: "w-[89px]" },
  { name: "I", width: "w-[139px]" },
];

interface SheetRow {
  height: string;
  num?: string;
  text?: string;
  head?: ReactNode;
  span?: number;
  wide?: boolean;
  headClass?: string;
}

const rows: SheetRow[] = [
  {
    height: "h-[34px]",
    num: "1",
    span: 3,
    headClass: "align-top leading-[18px] font-medium text-[#0000e0]",
    head: (
      <>
        待确认
        <br />
        光绘时
        <br />
        一起确
        <br />
        认问题
      </>
    ),
  },
  { height: "h-[34px]", num: "2" },
  { height: "h-[34px]", num: "3" },
  {
    height: "h-[45px]",
    text: "",
    wide: true,
    headClass: "align-middle font-medium text-black",
    head: (
      <>
        工艺流程
        <br />
        指示
      </>
    ),
  },
  {
    height: "h-[40px]",
    num: "1",
    text: "符合RoHS要求",
    span: 11,
    headClass: "align-middle font-medium text-black",
    head: (
      <>
        <span className={`text-[15px] font-bold ${MONO}`}>CAM</span>
        <br />
        指示
      </>
    ),
  },
  { height: "h-[50px]", num: "2", text: "掏除在绿油开窗区域的丝印" },
  { height: "h-[50px]", num: "3", text: "在不改变线距，铜与铜间距的情况下，加泪滴加强连接" },
  { height: "h-[40px]", num: "4", text: "树脂塞孔电镀填平，平整度按IPC-6012 CLASS 2标准" },
  { height: "h-[40px]", num: "5", text: "工艺边允许添加平衡铜，单元板内不允许加平衡铜" },
  {
    height: "h-[52px]",
    num: "6",
    text: "拼板参考PANEL_OUTLINE，工艺边按我司常规定位孔4个，6个MARK点(TOP/BOT各3个,\n板外形按outline层，OUTLINE层板内圆环对应有非金属化孔，按忽略圆环制作",
  },
  { height: "h-[40px]", num: "7", text: "外层完成铜厚1OZ" },
  { height: "h-[40px]", num: "8", text: "请根据阻抗设计调整线宽" },
  { height: "h-[40px]", num: "9", text: "原稿有断线，按原稿制作，断线不连接。" },
  { height: "h-[40px]", num: "10", text: "附图所示开窗在铜皮上，按原稿制作，不异常" },
  { height: "h-[40px]", num: "11", text: "附图所示，阻焊开窗形状不一致，按原稿制作不异常" },
  {
    height: "h-[37px]",
    num: "1",
    text: "金厚度0.05~0.2um",
    span: 4,
    headClass: "align-middle font-medium text-black",
    head: (
      <>
        工序
        <br />
        指示
      </>
    ),
  },
  { height: "h-[37px]", num: "2", text: "孔铜按IPC-6012 CLASS 3标准" },
  { height: "h-[37px]", num: "3", text: "标记添加在顶层丝印层" },
];

const CELL = "overflow-hidden border-r border-b border-black p-0";

function Sheet() {
  return (
    <div className="mt-[2px] min-h-0 flex-1 overflow-hidden bg-white">
      <table className={`w-[738px] table-fixed border-separate border-spacing-0 text-[16px] leading-[19px] ${SERIF}`}>
        <thead>
          <tr className="h-5 text-[#333f4e]">
            <th className="w-[34px] border-r border-b border-[#9eb6ce] bg-[#b1c9e8] p-0">
              <svg className="ml-auto" width="14" height="12" viewBox="0 0 14 12">
                <path d="M12 0v11H0z" fill="#e6eefa" />
              </svg>
            </th>
            {columns.map((col) => (
              <th key={col.name} className={`border-r border-b border-[#9eb6ce] bg-linear-to-b from-[#f6f9fc] to-[#d3dbe9] p-0 font-normal ${col.width}`}>
                {col.name}
              </th>
            ))}
          </tr>
        </thead>
        <tbody>
          {rows.map((row, i) => {
            const n = i + 4;
            return (
              <tr key={n} className={row.height}>
                <th
                  scope="row"
                  className={
                    n === 17
                      ? "border-r border-b border-[#f29536] bg-[#ffd58d] p-0 align-bottom leading-4 font-normal text-[#333f4e]"
                      : "border-r border-b border-[#9eb6ce] bg-[#e4ecf7] p-0 align-bottom leading-4 font-normal text-[#333f4e]"
                  }
                >
                  {n}
                </th>
                {row.head && (
                  <td rowSpan={row.span} colSpan={row.wide ? 2 : 1} className={`${CELL} text-center ${row.headClass}`}>
                    {row.head}
                  </td>
                )}
                {row.num && <td className={n < 8 ? `${CELL} text-center` : `${CELL} pt-[2px] text-center font-bold`}>{row.num}</td>}
                {row.text === undefined ? (
                  <>
                    <td colSpan={5} className={CELL} />
                    <td colSpan={2} className={CELL} />
                  </>
                ) : (
                  <td colSpan={7} className={`${CELL} pl-[3px] text-left text-[14px] leading-4 font-bold whitespace-nowrap text-black`}>
                    <Mixed text={row.text} />
                  </td>
                )}
              </tr>
            );
          })}
          <tr className="h-[76px]">
            <td className="border-r border-[#9eb6ce] bg-[#e4ecf7]" />
            <td className={CELL} />
            <td colSpan={7} className={CELL} />
          </tr>
        </tbody>
      </table>
    </div>
  );
}

function ExcelWindow() {
  return (
    <section className={`relative z-10 flex w-[35%] shrink-0 flex-col overflow-hidden bg-[#c3d9f5] shadow-[0_0_14px_rgba(0,0,0,.6)] ${UI}`}>
      <TitleAndTabs />
      <Ribbon />
      <MessageBar />
      <FormulaBar />
      <Sheet />
    </section>
  );
}

export default function App() {
  return (
    <div className="flex h-screen w-full overflow-hidden bg-black">
      <CamWindow />
      <ExcelWindow />
    </div>
  );
}
